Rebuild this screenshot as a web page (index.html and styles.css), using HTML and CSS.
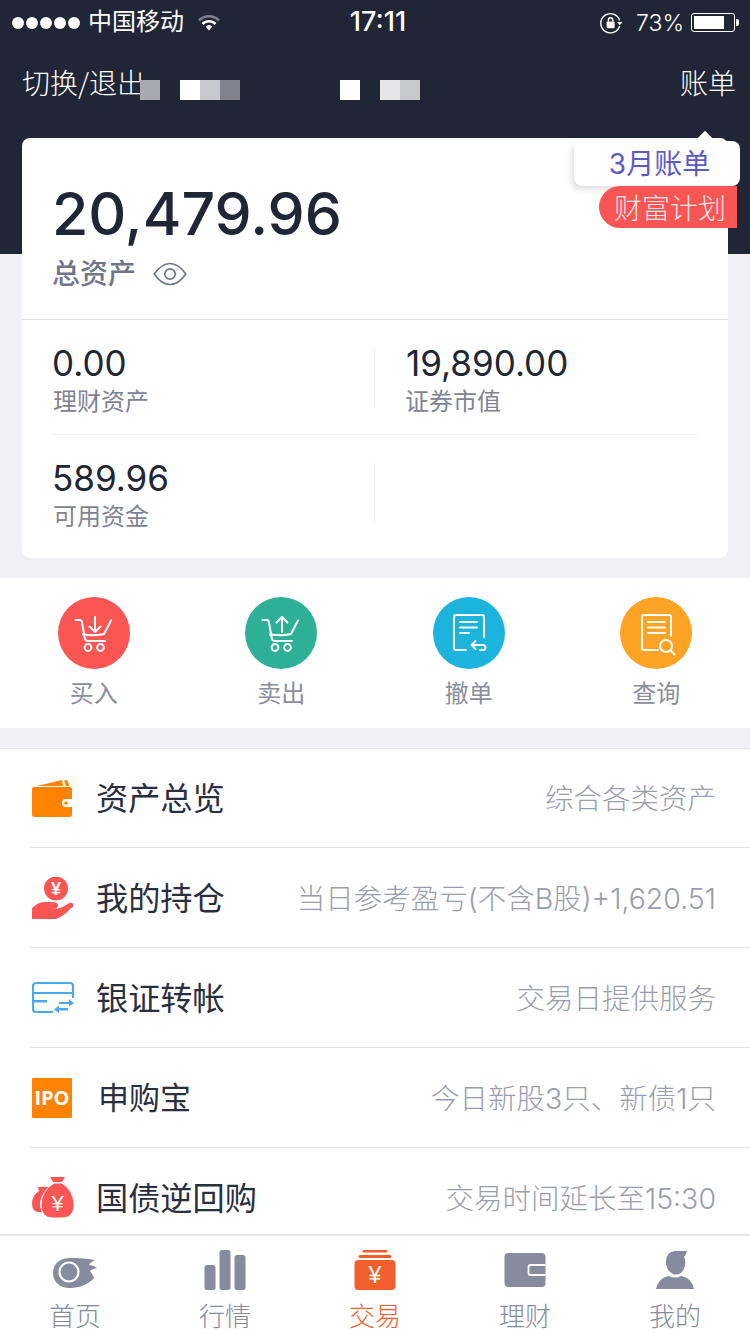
FILE: index.html
```html
<!DOCTYPE html>
<html lang="zh-CN">
  <head>
    <meta charset="UTF-8" />
    <meta name="viewport" content="width=device-width, initial-scale=1.0" />
    <title>交易</title>
    <link rel="stylesheet" href="styles.css">
  </head>

  <body>
    <div class="page">
      <!-- header -->
      <div class="header">
        <div class="status-bar">
          <div class="status-left">
            <span class="signal"><i></i><i></i><i></i><i></i><i></i></span>
            <span class="carrier">中国移动</span>
            <svg class="wifi" viewBox="0 0 24 18">
              <path d="M2 6.500a14 14 0 0 1 20 0" fill="none" stroke="#7d808b" stroke-width="2.600" />
              <path d="M5.500 10a9 9 0 0 1 13 0" fill="none" stroke="#fff" stroke-width="2.600" />
              <path d="M8.600 12.600a5 5 0 0 1 6.800 0L12 16.400z" fill="#fff" />
            </svg>
          </div>
          <div class="status-time">17:11</div>
          <div class="status-right">
            <svg class="rotate-lock" viewBox="0 0 24 24">
              <path d="M20.600 9.500A9.600 9.600 0 1 0 20.600 15" fill="none" stroke="#fff" stroke-width="1.400" />
              <path d="M18 11h5.500l-2.700 3.200z" fill="#fff" />
              <rect x="7.600" y="10.600" width="8" height="6.600" rx="1" fill="#fff" />
              <path d="M9.400 10.600V9a2.200 2.200 0 0 1 4.400 0v1.600" fill="none" stroke="#fff" stroke-width="1.400" />
            </svg>
            <span class="battery-text">73%</span>
            <span class="battery"><span class="battery-level"></span></span>
            <span class="battery-tip"></span>
          </div>
        </div>

        <div class="nav">
          <div class="nav-left">
            <span class="nav-link">切换/退出</span>
            <span class="pixels pixels-first">
              <i class="px-gray"></i>
            </span>
            <span class="pixels pixels-second">
              <i class="px-white"></i><i class="px-light"></i><i class="px-dark"></i>
            </span>
            <span class="pixels pixels-third">
              <i class="px-white"></i>
            </span>
            <span class="pixels pixels-fourth">
              <i class="px-pale"></i><i class="px-light"></i>
            </span>
          </div>
          <span class="nav-link">账单</span>
        </div>
      </div>

      <!-- 资产卡片 -->
      <div class="card">
        <div class="card-top">
          <div class="total">20,479.96</div>
          <div class="total-label">
            <span>总资产</span>
            <svg class="eye" viewBox="0 0 34 28">
              <path d="M1.200 14C6 7 11 3.500 17 3.500S28 7 32.800 14C28 21 23 24.500 17 24.500S6 21 1.200 14z" fill="none" stroke="#70758a" stroke-width="1.700" />
              <circle cx="17" cy="14" r="5.200" fill="none" stroke="#70758a" stroke-width="1.700" />
            </svg>
          </div>
        </div>
        <div class="asset-row">
          <div class="asset">
            <div class="asset-value">0.00</div>
            <div class="asset-label">理财资产</div>
          </div>
          <div class="asset asset-right">
            <div class="asset-value">19,890.00</div>
            <div class="asset-label">证券市值</div>
          </div>
        </div>
        <div class="asset-row asset-row-last">
          <div class="asset">
            <div class="asset-value">589.96</div>
            <div class="asset-label">可用资金</div>
          </div>
          <div class="asset asset-right"></div>
        </div>
      </div>

      <!-- 买卖操作 -->
      <div class="actions">
        <div class="action">
          <svg class="action-icon" viewBox="0 0 72 72">
            <circle cx="36" cy="36" r="36" fill="#fb5554" />
            <g fill="none" stroke="#fff" stroke-width="2" stroke-linecap="round" stroke-linejoin="round">
              <path d="M17.500 23h4.200q1.800 0 2.200 2l2.800 16q.5 3 3.200 3h17" />
              <path d="M25 37.500c8 1 15 1 21-.5l7-13.500" />
              <path d="M37 20v15M31.500 29.500L37 35l5.500-5.500" />
              <circle cx="30" cy="50.500" r="3.400" />
              <circle cx="42.500" cy="50.500" r="3.400" />
            </g>
          </svg>
          <span class="action-label">买入</span>
        </div>
        <div class="action">
          <svg class="action-icon" viewBox="0 0 72 72">
            <circle cx="36" cy="36" r="36" fill="#2eb096" />
            <g fill="none" stroke="#fff" stroke-width="2" stroke-linecap="round" stroke-linejoin="round">
              <path d="M17.500 23h4.200q1.800 0 2.200 2l2.800 16q.5 3 3.200 3h17" />
              <path d="M25 37.500c8 1 15 1 21-.5l7-13.500" />
              <path d="M37 35V20M31.500 25.500L37 20l5.500 5.500" />
              <circle cx="30" cy="50.500" r="3.400" />
              <circle cx="42.500" cy="50.500" r="3.400" />
            </g>
          </svg>
          <span class="action-label">卖出</span>
        </div>
        <div class="action">
          <svg class="action-icon" viewBox="0 0 72 72">
            <circle cx="36" cy="36" r="36" fill="#1cb3dc" />
            <g fill="none" stroke="#fff" stroke-width="2" stroke-linecap="round" stroke-linejoin="round">
              <path d="M51 40V20q0-2-2-2H23q-2 0-2 2v31q0 2 2 2h10" />
              <path d="M27 25h17M27 30.500h17M27 36h9" />
              <path d="M42.500 44l-4 4 4 4M38.500 48H50q2.500 0 2.500 2.500T50 53h-3" />
            </g>
          </svg>
          <span class="action-label">撤单</span>
        </div>
        <div class="action">
          <svg class="action-icon" viewBox="0 0 72 72">
            <circle cx="36" cy="36" r="36" fill="#fea324" />
            <g fill="none" stroke="#fff" stroke-width="2" stroke-linecap="round" stroke-linejoin="round">
              <path d="M51 39V20q0-2-2-2H24q-2 0-2 2v31q0 2 2 2h14" />
              <path d="M28 25h17M28 30.500h17M28 36h17" />
              <circle cx="46" cy="49" r="6" />
              <path d="M50.500 53.500l4 4" />
            </g>
          </svg>
          <span class="action-label">查询</span>
        </div>
      </div>

      <!-- 功能列表 -->
      <div class="menu">
        <div class="menu-row">
          <svg class="menu-icon" viewBox="0 0 42 42">
            <path d="M5 9L30 3l1 6zM32 3l3 .5q1.500.5 2 5.500h-3z" fill="#ff8300" />
            <path d="M2 10h36q2 0 2 2v10H34a4 4 0 0 0 0 8h6v8q0 2-2 2H2q-2 0-2-2V12q0-2 2-2z" fill="#ff8300" />
            <circle cx="34" cy="26" r="1.800" fill="#ff8300" />
          </svg>
          <div class="menu-title">资产总览</div>
          <div class="menu-note">综合各类资产</div>
        </div>
        <div class="menu-row">
          <svg class="menu-icon" viewBox="0 0 42 42">
            <circle cx="24" cy="11.500" r="12" fill="#fb5554" />
            <text class="yen-text yen-bold" x="24" y="18" font-size="18" text-anchor="middle">¥</text>
            <path d="M0 31q6-6 12-6h8q6 0 6 3.500T20 32h-6 8q6 0 12-4t7-1-2 4Q32 39 24 42H0z" fill="#fb5554" />
          </svg>
          <div class="menu-title">我的持仓</div>
          <div class="menu-note">当日参考盈亏(不含B股)+1,620.51</div>
        </div>
        <div class="menu-row">
          <svg class="menu-icon" viewBox="0 0 42 42">
            <path d="M21 35H4q-3 0-3-3V9q0-3 3-3h34q3 0 3 3v12M1 16h40" fill="none" stroke="#49a9ea" stroke-width="2.200" />
            <path d="M1 23h14v2.500H1z" fill="#49a9ea" />
            <path d="M27 25h10v-3l5 4.200-5 3.300v-2.500H27zM36 31H27v-2.500l-5 4 5 3.500v-2.500h9z" fill="#49a9ea" />
          </svg>
          <div class="menu-title">银证转帐</div>
          <div class="menu-note">交易日提供服务</div>
        </div>
        <div class="menu-row">
          <div class="ipo-icon">IPO</div>
          <div class="menu-title menu-title-ipo">申购宝</div>
          <div class="menu-note">今日新股3只、新债1只</div>
        </div>
        <div class="menu-row">
          <svg class="menu-icon" viewBox="0 0 42 42">
            <path d="M6 10h11l-3 4q-6 6-6 13 0 4 2 8H6q-6-1-6-8 0-9 7-13z" fill="#fb5554" />
            <path d="M18 0h15l-3 5H21z" fill="#fb5554" />
            <path d="M22 6h8q12 8 12 22 0 13-12 13H21Q9 41 9 28 9 14 22 6z" fill="#fb5554" stroke="#fff" stroke-width="1" />
            <text class="yen-text" x="25.500" y="34" font-size="22" text-anchor="middle">¥</text>
          </svg>
          <div class="menu-title">国债逆回购</div>
          <div class="menu-note">交易时间延长至15:30</div>
        </div>
      </div>

      <!-- tab bar -->
      <div class="tabbar">
        <div class="tab">
          <svg class="tab-icon" viewBox="0 0 44 40">
            <path d="M17 8c9 0 17 .5 25 2-3 1.500-5 3-6 5 3 0 5.500 1 8 3-3 .5-5.500 1.500-7 3 1.500 2 3 4 4 7-5 6-14 10-24 10C7 38 0 32 0 23S7 8 17 8z" fill="#868b9e" />
            <circle cx="16" cy="22" r="9.500" fill="none" stroke="#fff" stroke-width="2.200" />
          </svg>
          <span>首页</span>
        </div>
        <div class="tab">
          <svg class="tab-icon" viewBox="0 0 41 40">
            <rect x="0" y="15" width="11" height="25" rx="2.500" fill="#868b9e" />
            <rect x="15" y="0" width="11" height="40" rx="2.500" fill="#868b9e" />
            <rect x="30" y="5" width="11" height="35" rx="2.500" fill="#868b9e" />
          </svg>
          <span>行情</span>
        </div>
        <div class="tab tab-active">
          <svg class="tab-icon" viewBox="0 0 41 40">
            <rect x="8" y="0" width="25" height="2.600" rx="1.300" fill="#f25f2c" />
            <rect x="4" y="5" width="33" height="3" rx="1.500" fill="#f25f2c" />
            <rect x="0" y="10" width="41" height="30" rx="4" fill="#f25f2c" />
            <text class="yen-text" x="20.500" y="33" font-size="23" text-anchor="middle">¥</text>
          </svg>
          <span>交易</span>
        </div>
        <div class="tab">
          <svg class="tab-icon" viewBox="0 0 41 40">
            <rect x="0" y="3" width="41" height="34" rx="4" fill="#868b9e" />
            <path d="M41 15H26q-2 0-2 2v6q0 2 2 2h15" fill="none" stroke="#fff" stroke-width="1.800" />
          </svg>
          <span>理财</span>
        </div>
        <div class="tab">
          <svg class="tab-icon" viewBox="0 0 40 40">
            <path d="M20 1h12q-1 4-3 6 2 3 1 8-1 7-6 9-3 1-6 0-6-3-7-10Q10 2 20 1z" fill="#868b9e" />
            <path d="M14 26q6 3 12 0 11 2 13 13H1q2-11 13-13z" fill="#868b9e" />
          </svg>
          <span>我的</span>
        </div>
      </div>

      <!-- 账单气泡 -->
      <div class="bill-tip">
        <span class="bill-arrow"></span>
        3月账单
      </div>
      <div class="plan-badge">财富计划</div>
    </div>
  </body>
</html>
```

FILE: styles.css
```css
* {
  box-sizing: border-box;
}

html,
body {
  margin: 0;
  padding: 0;
}

body {
  font-family: Inter, "Noto Sans CJK SC", sans-serif;
  background-color: #f0f0f5;
}

.page {
  position: relative;
  width: 750px;
  height: 1334px;
  display: flex;
  flex-direction: column;
  overflow: hidden;
  background-color: #f0f0f5;
}

/* header */
.header {
  height: 254px;
  flex-shrink: 0;
  background-color: #202636;
  color: #fff;
}

.status-bar {
  height: 40px;
  padding: 2px 11px 0 12px;
  display: grid;
  grid-template-columns: 1fr auto 1fr;
  align-items: center;
  font-size: 24px;
}

.status-left {
  display: flex;
  align-items: center;
}

.signal {
  display: flex;
  gap: 2px;
}

.signal i {
  width: 12px;
  height: 12px;
  border-radius: 50%;
  background-color: #fff;
}

.carrier {
  margin-left: 8px;
  margin-bottom: 6px;
  font-family: "Noto Sans CJK SC", sans-serif;
  font-size: 24px;
}

.wifi {
  width: 24px;
  height: 18px;
  margin-left: 13px;
}

.status-time {
  font-size: 27px;
  font-weight: 500;
  margin-left: 5px;
  margin-bottom: 2px;
}

.status-right {
  display: flex;
  align-items: center;
  justify-content: flex-end;
}

.rotate-lock {
  width: 24px;
  height: 24px;
}

.battery-text {
  margin-left: 13px;
  font-size: 23px;
  font-weight: 300;
}

.battery {
  width: 44px;
  height: 19px;
  margin-left: 7px;
  padding: 2px;
  border: 1px solid #fff;
  border-radius: 3px;
}

.battery-level {
  display: block;
  width: 30px;
  height: 13px;
  background-color: #fff;
}

.battery-tip {
  width: 3px;
  height: 7px;
  margin-left: 1px;
  border-radius: 0 2px 2px 0;
  background-color: #fff;
}

.nav {
  padding: 20px 14px 0 22px;
  display: flex;
  justify-content: space-between;
  align-items: flex-start;
}

.nav-left {
  display: flex;
  align-items: flex-start;
}

.nav-link {
  font-family: "Noto Sans CJK SC", sans-serif;
  font-size: 28px;
  line-height: 44px;
  font-weight: 300;
}

.pixels {
  display: flex;
  margin-top: 20px;
}

.pixels i {
  width: 20px;
  height: 20px;
}

.pixels-first {
  margin-left: -5px;
}

.pixels-second {
  margin-left: 20px;
}

.pixels-third {
  margin-left: 100px;
}

.pixels-fourth {
  margin-left: 20px;
}

.px-gray {
  background-color: #a8a9ae;
}

.px-white {
  background-color: #fff;
}

.px-light {
  background-color: #c8c9cd;
}

.px-dark {
  background-color: #80828c;
}

.px-pale {
  background-color: #e6e6e8;
}

/* card */
.card {
  position: relative;
  width: 706px;
  height: 420px;
  margin: -116px 0 20px 22px;
  flex-shrink: 0;
  background-color: #fff;
  border-radius: 8px;
}

.card-top {
  height: 182px;
  padding: 40px 30px 0;
  border-bottom: 1px solid #e4e4e8;
}

.total {
  font-size: 59px;
  line-height: 72px;
  font-weight: 500;
  color: #202636;
}

.total-label {
  margin-top: 4px;
  display: flex;
  align-items: center;
  font-family: "Noto Sans CJK SC", sans-serif;
  font-size: 28px;
  font-weight: 500;
  line-height: 36px;
  color: #70758a;
}

.eye {
  width: 34px;
  height: 28px;
  margin-left: 17px;
  margin-top: 3px;
}

.asset-row {
  height: 115px;
  margin: 0 30px 0 31px;
  padding-top: 28px;
  display: flex;
  align-items: flex-start;
  border-bottom: 1px solid #f0f0f3;
}

.asset-row-last {
  border-bottom: none;
}

.asset {
  width: 322px;
  height: 59px;
  margin-left: -1px;
  margin-right: 1px;
  flex-shrink: 0;
}

.asset-right {
  padding-left: 31px;
  border-left: 1px solid #f0f0f3;
}

.asset-value {
  margin-top: -4px;
  font-size: 35px;
  line-height: 38px;
  color: #202636;
}

.asset-label {
  margin-top: 1px;
  margin-left: 1px;
  font-family: "Noto Sans CJK SC", sans-serif;
  font-size: 24px;
  line-height: 34px;
  color: #7f8393;
}

.asset-right .asset-label {
  margin-left: -1px;
}

/* actions */
.actions {
  height: 150px;
  flex-shrink: 0;
  padding-top: 19px;
  display: grid;
  grid-template-columns: repeat(4, 187.5px);
  background-color: #fff;
}

.action {
  display: flex;
  flex-direction: column;
  align-items: center;
}

.action-icon {
  width: 72px;
  height: 72px;
}

.action-label {
  margin-top: 6px;
  font-family: "Noto Sans CJK SC", sans-serif;
  font-size: 24px;
  line-height: 34px;
  color: #8a8e9c;
}

/* menu */
.menu {
  flex: 1;
  min-height: 0;
  margin-top: 20px;
  border-top: 1px solid #e4e4e8;
  background-color: #fff;
  overflow: hidden;
}

.menu-row {
  height: 100px;
  margin-left: 30px;
  padding-right: 34px;
  display: flex;
  align-items: center;
  border-bottom: 1px solid #e4e4e8;
}

.menu-row:first-child {
  height: 99px;
}

.menu-icon {
  width: 42px;
  height: 42px;
  margin-left: 2px;
  flex-shrink: 0;
}

.ipo-icon {
  width: 40px;
  height: 40px;
  margin-left: 2px;
  flex-shrink: 0;
  background-color: #ff8300;
  border-radius: 1px;
  font-family: "Open Sans", sans-serif;
  font-size: 20px;
  font-weight: 700;
  line-height: 40px;
  text-align: center;
  color: #fff;
}

.menu-title {
  margin-left: 22px;
  margin-bottom: 4px;
  font-family: "Noto Sans CJK SC", sans-serif;
  font-size: 32.2px;
  color: #2a2f40;
}

.menu-title-ipo {
  margin-left: 26px;
  font-size: 31px;
}

.menu-note {
  margin-left: auto;
  margin-bottom: 3px;
  font-family: Inter, "Noto Sans CJK SC", sans-serif;
  font-size: 28.5px;
  font-weight: 300;
  color: #9a9dab;
  white-space: nowrap;
}

.yen-text {
  font-family: "Liberation Sans", sans-serif;
  fill: #fff;
}

.yen-bold {
  font-weight: 700;
}

/* tab bar */
.tabbar {
  height: 100px;
  flex-shrink: 0;
  padding-top: 14px;
  display: grid;
  grid-template-columns: repeat(5, 150px);
  border-top: 2px solid #e4e4e4;
  background-color: #fff;
}

.tab {
  display: flex;
  flex-direction: column;
  align-items: center;
  font-family: "Noto Sans CJK SC", sans-serif;
  font-size: 26px;
  line-height: 36px;
  font-weight: 300;
  color: #868b9e;
}

.tab-icon {
  width: 44px;
  height: 40px;
  margin-bottom: 7px;
}

.tab-active {
  color: #f0602f;
}

/* over the card */
.bill-tip {
  position: absolute;
  top: 141px;
  left: 574px;
  width: 166px;
  height: 45px;
  border-radius: 8px;
  background-color: #fff;
  box-shadow: -2px 3px 6px rgba(32, 38, 58, 0.16);
  font-family: Inter, "Noto Sans CJK SC", sans-serif;
  font-size: 28px;
  line-height: 46px;
  text-align: center;
  text-indent: 5px;
  color: #5b5bc8;
}

.bill-arrow {
  position: absolute;
  top: -9px;
  left: 122px;
  width: 18px;
  height: 18px;
  transform: rotate(45deg) scale(0.8);
  background-color: #fff;
}

.plan-badge {
  position: absolute;
  top: 186px;
  left: 599px;
  width: 138px;
  height: 42px;
  padding-left: 15px;
  border-radius: 21px 0 0 21px;
  background-color: #fa5555;
  font-family: "Noto Sans CJK SC", sans-serif;
  font-size: 28px;
  font-weight: 300;
  line-height: 42px;
  white-space: nowrap;
  color: #fde6e6;
}
```
